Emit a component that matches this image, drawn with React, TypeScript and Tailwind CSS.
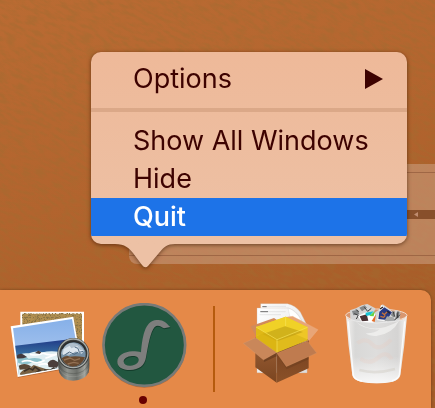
import React from "react";

interface MenuItem {
  label: string;
  active?: boolean;
}

const windowItems: MenuItem[] = [
  { label: "Show All Windows" },
  { label: "Hide" },
  { label: "Quit", active: true },
];

const itemBase =
  "flex h-[38px] w-full items-center justify-between pl-[42px] pr-6 text-left text-[27px] leading-9";

// Leather-like desktop background
const Wallpaper: React.FC = () => (
  <svg className="absolute inset-0 h-full w-full" aria-hidden="true">
    <defs>
      <linearGradient id="leather" x1="0" y1="0" x2="0.3" y2="1">
        <stop offset="0" stopColor="#ba6b33" />
        <stop offset="0.5" stopColor="#b2642e" />
        <stop offset="1" stopColor="#a65c28" />
      </linearGradient>
      <filter id="grain" x="0" y="0" width="100%" height="100%">
        <feTurbulence type="fractalNoise" baseFrequency="0.09 0.28" numOctaves="4" seed="4" />
        <feColorMatrix values="0 0 0 0 0.36  0 0 0 0 0.15  0 0 0 0 0.03  3.4 0 0 0 -1.4" />
      </filter>
    </defs>
    <rect width="100%" height="100%" fill="url(#leather)" />
    <g transform="rotate(28)">
      <rect x="-100" y="-350" width="900" height="900" filter="url(#grain)" opacity="0.45" />
    </g>
  </svg>
);

// Two photos with a loupe lying on top
const PreviewIcon: React.FC = () => (
  <svg viewBox="24 39 252 258" className="h-[86px] w-[84px]" aria-hidden="true">
    <defs>
      <linearGradient id="sky" x1="0" y1="0" x2="0" y2="1">
        <stop offset="0" stopColor="#84afe8" />
        <stop offset="1" stopColor="#b9cff1" />
      </linearGradient>
      <linearGradient id="sea" x1="0" y1="0" x2="0" y2="1">
        <stop offset="0" stopColor="#1f3585" />
        <stop offset="0.4" stopColor="#376ea0" />
        <stop offset="1" stopColor="#a7cdd6" />
      </linearGradient>
      <linearGradient id="barrel" x1="0" y1="0" x2="1" y2="0">
        <stop offset="0" stopColor="#4c4e4b" />
        <stop offset="0.3" stopColor="#91948e" />
        <stop offset="0.6" stopColor="#6d706b" />
        <stop offset="0.85" stopColor="#a2a49e" />
        <stop offset="1" stopColor="#4b4d49" />
      </linearGradient>
      <filter id="sand" x="0" y="0" width="100%" height="100%">
        <feTurbulence type="fractalNoise" baseFrequency="0.5" numOctaves="2" seed="2" />
        <feColorMatrix values="0 0 0 0 0.25  0 0 0 0 0.17  0 0 0 0 0.06  5 0 0 0 -2.3" />
      </filter>
      <clipPath id="photo">
        <path d="M39 115 216 87 240 222 57 256Z" />
      </clipPath>
    </defs>
    <path d="M61 65h191v128H61Z" fill="#fff" />
    <path d="M67 71h179v116H67Z" fill="#b39050" />
    <rect x="67" y="71" width="179" height="116" filter="url(#sand)" />
    <path d="M34 111 220 80 246 228 54 263Z" fill="#6b3818" opacity="0.4" />
    <path d="M32 109 220 80 245 226 53 261Z" fill="#fff" />
    <g clipPath="url(#photo)">
      <path d="M30 80h220v190H30Z" fill="url(#sky)" />
      <path d="M40 168 240 144v120H40Z" fill="url(#sea)" />
      <path d="M45 200q20-13 42-10 20-9 41-3 20-6 50-2l60-8v60L50 262Z" fill="#dfeef1" />
      <path d="M50 202q25-8 36 4 30-5 42 5-22 9-30 6-20 11-43 2Z" fill="#8dc2cc" />
      <path d="M90 193q22 5 39-3 20 8 43 2M65 215q18-6 32 0 17 8 37-4M115 225q22-8 52 3M136 205l35-12" fill="none" stroke="#fff" strokeWidth="5" />
      <path d="M49 197q12-9 22-3l10 7q-15 6-31 4Z" fill="#443b3e" />
      <path d="M105 189l10-7 9 5-5 5ZM143 219q9-12 20-9l16 9-8 14-25-2Z" fill="#4b3e3b" />
      <path d="M56 227q13-8 28-3l9 5-7 8-27 2Z" fill="#5a4938" />
      <path d="M60 250q12-15 29-16l12-9 15 5 24 8 32-2 12 22-120 10Z" fill="#776043" />
      <path d="M72 244l17-9 9 5 7-9 15 10-14 8M132 240l17 2 12-8 10 11" fill="none" stroke="#3d3329" strokeWidth="5" />
    </g>
    <path d="M174 199q-1 32 4 49 11 24 42 24 35 0 46-25 4-17 1-56Z" fill="url(#barrel)" />
    <path d="M176 221q9 31 45 30 35-1 46-31" fill="none" stroke="#484b47" strokeWidth="2" opacity="0.6" />
    <path d="M179 238q12 24 43 22 31-1 43-24" fill="none" stroke="#b9bbb4" strokeWidth="2" opacity="0.4" />
    <ellipse cx="220" cy="191" rx="48" ry="47" fill="#393b3a" />
    <ellipse cx="220" cy="190" rx="44" ry="43" fill="none" stroke="#a9adaa" strokeWidth="4" />
    <ellipse cx="220" cy="193" rx="37" ry="37" fill="#7690a5" />
    <path d="M184 191q6-24 25-31 27-6 44 22-6 10-22 5-17-1-24 10-14-6-23-6Z" fill="#afbecb" />
    <path d="M191 177l18-10 5 8 18-7 8 12 10 1-4 10-19-7-12 9-13-5-14 8Z" fill="#dce5ed" />
    <path d="M224 171l10 4 4 12 11-3M196 194l12-8 15 7 11-6" fill="none" stroke="#526c85" strokeWidth="3" />
    <path d="M185 205q13-10 25-5 17-4 45 2-10 28-37 28-23-2-33-25Z" fill="#68492f" />
    <path d="M192 210l18-6 14 7 16-5M203 222l18-5 15 3" fill="none" stroke="#937154" strokeWidth="4" />
    <path d="M186 177q12-24 38-22 24 3 32 24" fill="none" stroke="#292a2b" strokeWidth="4" />
  </svg>
);

// Music note in a green disc
const NoteIcon: React.FC = () => (
  <svg viewBox="21 39 258 258" className="h-[86px] w-[86px]" aria-hidden="true">
    <circle cx="148" cy="168" r="125" fill="#8d4c25" opacity="0.5" />
    <circle cx="148" cy="165" r="122.5" fill="#225740" stroke="#777a77" strokeWidth="8" />
    <g fillRule="evenodd">
      <path
        d="M138 187C142 146 148 91 185 90C205 88 213 98 226 111L207 115C197 109 188 103 179 111C166 125 160 165 153 202C149 227 132 240 105 240C82 240 67 231 67 215C67 197 88 185 112 184C123 184 131 185 138 187ZM131 210C131 201 122 197 111 198C96 199 86 206 86 215C87 224 96 228 107 227C121 226 131 219 131 210Z"
        fill="#143c2b"
        transform="translate(1 3)"
      />
      <path
        d="M138 187C142 146 148 91 185 90C205 88 213 98 226 111L207 115C197 109 188 103 179 111C166 125 160 165 153 202C149 227 132 240 105 240C82 240 67 231 67 215C67 197 88 185 112 184C123 184 131 185 138 187ZM131 210C131 201 122 197 111 198C96 199 86 206 86 215C87 224 96 228 107 227C121 226 131 219 131 210Z"
        fill="#7d7e7d"
      />
    </g>
  </svg>
);

// Open cardboard box with paper and a yellow cube
const PackageIcon: React.FC = () => (
  <svg viewBox="18 39 246 258" className="h-[86px] w-[82px]" aria-hidden="true">
    <defs>
      <linearGradient id="page" x1="0" y1="0" x2="1" y2="1">
        <stop offset="0" stopColor="#fff" />
        <stop offset="1" stopColor="#dedede" />
      </linearGradient>
      <linearGradient id="cardLeft" x1="0" y1="0" x2="0" y2="1">
        <stop offset="0" stopColor="#9b5e35" />
        <stop offset="1" stopColor="#7a4520" />
      </linearGradient>
      <linearGradient id="cardRight" x1="0" y1="0" x2="0" y2="1">
        <stop offset="0" stopColor="#754020" />
        <stop offset="1" stopColor="#8b5128" />
      </linearGradient>
    </defs>
    <path d="M77 41h81q24 6 38 25l20 40v142H77Z" fill="url(#page)" stroke="#c7b8ab" />
    <path d="M66 54h93q25 7 38 32l19 40v122H66Z" fill="url(#page)" stroke="#cdbfb2" />
    <path d="M159 54q24 7 40 37l-34-10Z" fill="#fff" stroke="#ccc" />
    <path d="M83 49h70M76 65h76M74 74h64" stroke="#bcbcbc" strokeWidth="1" />
    <path d="M82 50h13M76 65h23" stroke="#707070" strokeWidth="3" />
    <path d="M47 109l70-25 32 22-87 31Z" fill="#d28b5b" />
    <path d="M151 82l22-3 76 40-30 36-67-35Z" fill="#e8a577" stroke="#edb489" />
    <path d="M61 142l61-35 98 42-94 45Z" fill="#7c4825" />
    <path d="M61 151l64 38v89l-64-46Z" fill="url(#cardLeft)" />
    <path d="M125 189l96-38v84l-96 43Z" fill="url(#cardRight)" />
    <path d="M62 151l63 38v89" fill="none" stroke="#b17a4d" />
    <path d="M63 111l89-31 66 32v39l-93 37-62-39Z" fill="#eecb1b" opacity="0.88" />
    <path d="M63 111l89-31 66 32-92 37Z" fill="#f0d127" />
    <path d="M83 132l67-23 54 17-78 28Z" fill="#bd9c14" opacity="0.6" />
    <path d="M63 111l63 37v40l-63-39Z" fill="#d9b00d" opacity="0.6" />
    <path d="M63 111l63 38 92-37M126 149v39M152 80v28" fill="none" stroke="#f8e45a" strokeWidth="2" />
    <path d="M62 143l63 45-39 22-61-50Z" fill="#c9875a" stroke="#da9d72" />
    <path d="M126 190l91-37 28 36-91 41Z" fill="#bf7b4f" stroke="#d69768" />
    <path d="M86 210l39-22v11l-38 17Z" fill="#5e351a" opacity="0.6" />
    <path d="M154 230l67-29v7l-66 30-27-42Z" fill="#5e351a" opacity="0.3" />
  </svg>
);

// Translucent bin with crumpled photos
const TrashIcon: React.FC = () => (
  <svg viewBox="36 69 204 258" className="h-[86px] w-[68px]" aria-hidden="true">
    <defs>
      <linearGradient id="bin" x1="0" y1="0" x2="1" y2="0">
        <stop offset="0" stopColor="#f3f1ef" />
        <stop offset="0.15" stopColor="#d8d8d7" />
        <stop offset="0.5" stopColor="#dedddc" />
        <stop offset="0.85" stopColor="#d5d4d3" />
        <stop offset="1" stopColor="#f4f2ef" />
      </linearGradient>
      <linearGradient id="binFoot" x1="0" y1="0" x2="0" y2="1">
        <stop offset="0.6" stopColor="#fff" stopOpacity="0" />
        <stop offset="1" stopColor="#fff" stopOpacity="0.8" />
      </linearGradient>
    </defs>
    <ellipse cx="139" cy="106" rx="92" ry="19" fill="#d89770" stroke="#f1d9c8" strokeWidth="3" />
    <path d="M60 91l18-6 17-9 17-4 24 13-5 15 14-9 13-18 22 15 5 12 14-9 12 5-2 27-35 18H86l-25-22Z" fill="#d4d4d4" />
    <path d="M66 93l18-4 4 14-18 3ZM88 83l16-7 7 7-15 11ZM185 92l10 3-3 18-9-7ZM199 98l10-3-1 18-12 5Z" fill="#84888a" />
    <path d="M73 101l12 5-6 11M103 82l10 12 11-9M175 109l19 11 16-16M78 88l8 8M190 96l4 14M204 94l-2 20" fill="none" stroke="#3c3c3c" strokeWidth="3" />
    <path d="M84 108l25-12 27 6-6 26-35-2Z" fill="#fff" />
    <path d="M89 109l21-6 5 19-19 2Z" fill="#4b3335" />
    <path d="M106 98l25-4-9 11-13 3Z" fill="#19c3d4" />
    <path d="M118 108l16-14-3 15Z" fill="#66d443" />
    <path d="M125 123l13-20-4 23Z" fill="#e56d27" />
    <path d="M153 74l34 21-16 30-30-5Z" fill="#f5f5f5" />
    <path d="M148 95l15-13 23 15-15 23-26-3Z" fill="#293a82" />
    <path d="M156 98l7 6 8-8M151 109l10 3 5-6" fill="none" stroke="#c9743a" strokeWidth="4" />
    <path d="M150 87l9-6M172 94l8 6" stroke="#2c2425" strokeWidth="4" />
    <path d="M163 124l8-15 18 3 6 10Z" fill="#a7a9aa" />
    <path d="M48 107Q51 120 90 125q50 8 99 0 35-5 42-18-7 92-20 178-3 14-23 20-47 10-96 0-23-6-25-20Q54 195 48 107Z" fill="url(#bin)" />
    <path d="M48 107Q51 120 90 125q50 8 99 0 35-5 42-18-7 92-20 178-3 14-23 20-47 10-96 0-23-6-25-20Q54 195 48 107Z" fill="url(#binFoot)" />
    <path d="M76 124q55 43 131-1-20 39-68 45-20 1-32-8 27 1 42-12-47 3-73-24Z" fill="#f6f6f5" opacity="0.65" />
    <path d="M82 190q24-20 45 3t56-14M91 236q28 20 53-3t41 5" fill="none" stroke="#eec9bb" strokeWidth="12" opacity="0.22" />
    <path d="M88 270q49 14 107-3" fill="none" stroke="#c9c4b8" strokeWidth="8" opacity="0.35" />
    <path d="M55 124l15 162q4 13 26 17M224 124l-16 160q-4 14-22 18" fill="none" stroke="#fff" strokeWidth="4" opacity="0.8" />
    <path d="M49 108q8 13 41 17 50 8 99 0 34-4 41-17" fill="none" stroke="#fafafa" strokeWidth="2" opacity="0.8" />
  </svg>
);

// Translucent window peeking out behind the menu
const BackWindow: React.FC = () => (
  <div className="absolute left-[129px] right-0 top-[164px] flex h-[100px] flex-col justify-between rounded-l-lg bg-[#d0a58b]/50 py-2">
    <div className="h-px bg-[#8a5335]/60" />
    <div className="flex h-[9px] items-center justify-end bg-[#7b421f]/80 pr-4">
      <svg viewBox="0 0 5 5" className="h-[5px] w-[5px]" aria-hidden="true">
        <path d="M0 2.5 4 0v5Z" fill="#c08c6f" />
      </svg>
    </div>
    <div className="h-px bg-[#8a5335]/60" />
  </div>
);

const DockMenu: React.FC = () => (
  <div className="relative drop-shadow-[0_1px_2px_rgba(50,20,0,0.6)]">
    <div
      role="menu"
      className="overflow-hidden rounded-[10px] bg-linear-to-b from-[#eeb999] to-[#edc1a5] py-2 text-[#3d0200]"
    >
      <button type="button" role="menuitem" className={itemBase}>
        Options
        <svg viewBox="0 0 18 20" className="h-5 w-[18px]" aria-hidden="true">
          <path d="M0 0 18 10 0 20Z" fill="currentColor" />
        </svg>
      </button>
      <hr className="my-2.5 h-1 border-0 bg-[#dba888]" />
      {windowItems.map((item) => (
        <button
          key={item.label}
          type="button"
          role="menuitem"
          className={`${itemBase} ${item.active ? "bg-[#1d73e8] font-medium text-white" : ""}`}
        >
          {item.label}
        </button>
      ))}
    </div>
    {/* Pointer towards the dock icon */}
    <svg viewBox="0 0 60 24" className="ml-6 block h-6 w-[60px]" aria-hidden="true">
      <path d="M0 0C10 0 14 4 18 9L27 21Q30 25 33 22L44 9C49 3 52 0 60 0Z" fill="#edc1a5" />
    </svg>
  </div>
);

const Dock: React.FC = () => (
  <nav
    aria-label="Dock"
    className="relative mr-1 flex flex-1 items-start rounded-tr-[10px] bg-[#e58948] pb-1 pl-2 pt-[13px] shadow-[0_0_3px_rgba(60,25,0,0.5)]"
  >
    <button type="button" aria-label="Preview">
      <PreviewIcon />
    </button>
    <button type="button" aria-label="Music" className="ml-2.5 flex flex-col items-center">
      <NoteIcon />
      <span className="mr-1 mt-[7px] h-2 w-2 rounded-full bg-[#680000]" />
    </button>
    <div className="ml-[25px] mt-[3px] h-[86px] w-0.5 bg-[#b65b0d]" />
    <button type="button" aria-label="Package" className="ml-[26px]">
      <PackageIcon />
    </button>
    <button type="button" aria-label="Trash" className="ml-[19px]">
      <TrashIcon />
    </button>
  </nav>
);

const App: React.FC = () => (
  <div className="relative flex min-h-screen flex-col overflow-hidden bg-[#ab5f2a] font-['Inter','Liberation_Sans',sans-serif]">
    <Wallpaper />
    <main className="relative pb-[22px] pl-[91px] pr-7 pt-[52px]">
      <BackWindow />
      <DockMenu />
    </main>
    <Dock />
  </div>
);

export default App;
